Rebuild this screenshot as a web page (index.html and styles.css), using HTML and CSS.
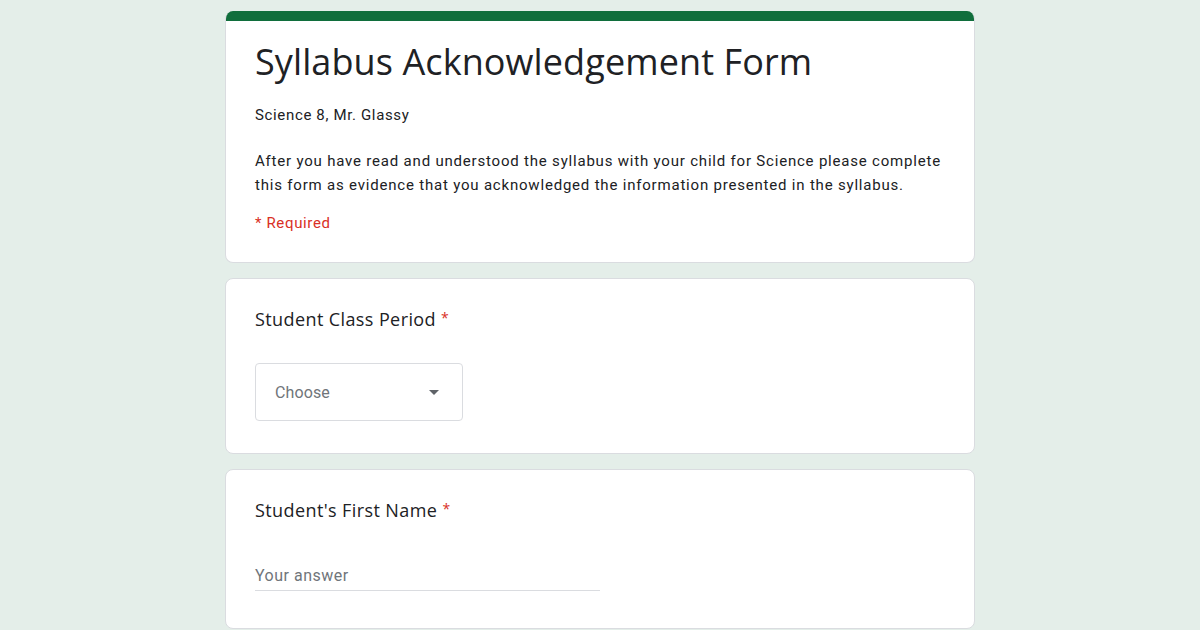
FILE: index.html
```html
<!DOCTYPE html>
<html>
<head>
<meta charset="utf-8">
<link rel="stylesheet" href="styles.css">
</head>
<body>
<div class="form">
  <div class="card header-card">
    <div class="accent"></div>
    <div class="header-body">
      <h1 class="title">Syllabus Acknowledgement Form</h1>
      <p class="subtitle">Science 8, Mr. Glassy</p>
      <p class="desc">After you have read and understood the syllabus with your child for Science please complete this form as evidence that you acknowledged the information presented in the syllabus.</p>
      <p class="required">* Required</p>
    </div>
  </div>
  <div class="card question">
    <div class="q-title">Student Class Period <span class="star">*</span></div>
    <div class="select">
      <span class="select-text">Choose</span>
      <svg class="caret" width="10" height="5" viewBox="0 0 10 5"><path d="M0 0 L10 0 L5 5 Z" fill="#5f6368"/></svg>
    </div>
  </div>
  <div class="card question">
    <div class="q-title">Student's First Name <span class="star">*</span></div>
    <div class="answer">Your answer</div>
  </div>
</div>
</body>
</html>
```

FILE: styles.css
```css
html, body {
  margin: 0;
  padding: 0;
}
body {
  background: #e4eee9;
  font-family: Roboto, "Liberation Sans", sans-serif;
  color: #202124;
  width: 1200px;
  height: 630px;
  overflow: hidden;
}
.form {
  width: 750px;
  margin: 11px auto 0;
  display: flex;
  flex-direction: column;
  gap: 15px;
}
.card {
  background: #fff;
  border: 1px solid #dadce0;
  border-radius: 8px;
  box-sizing: border-box;
}
.header-card {
  overflow: hidden;
  border-top: none;
  height: 252px;
}
.accent {
  height: 10px;
  background: #106e3c;
}
.header-body {
  padding: 17px 29px 0;
}
.title {
  margin: 0;
  font-family: "Open Sans", sans-serif;
  font-weight: 400;
  font-size: 36px;
  line-height: 48px;
  color: #202124;
  letter-spacing: 0.1px;
}
.subtitle {
  margin: 18px 0 0;
  font-size: 15px;
  line-height: 22px;
  letter-spacing: 0.65px;
}
.desc {
  margin: 23px 0 0;
  font-size: 15px;
  line-height: 24px;
  letter-spacing: 0.8px;
}
.required {
  margin: 15px 0 0;
  font-size: 15px;
  line-height: 22px;
  letter-spacing: 0.65px;
  color: #d93025;
}
.question {
  padding: 26px 29px 0;
}
.question:nth-child(2) {
  height: 176px;
}
.question:nth-child(3) {
  height: 160px;
}
.q-title {
  font-family: "Open Sans", sans-serif;
  font-size: 18px;
  line-height: 28px;
  height: 28px;
  letter-spacing: 0.4px;
  color: #202124;
}
.star {
  color: #d93025;
  font-size: 14px;
  line-height: 0;
  vertical-align: 3px;
}
.select {
  margin-top: 30px;
  width: 208px;
  height: 58px;
  box-sizing: border-box;
  border: 1px solid #dadce0;
  border-radius: 4px;
  display: flex;
  align-items: center;
  justify-content: space-between;
  padding: 0 23px 0 19px;
}
.select-text {
  font-size: 16px;
  color: #70757a;
  letter-spacing: 0.1px;
}
.answer {
  margin-top: 40px;
  width: 345px;
  font-size: 16px;
  color: #70757a;
  line-height: 24px;
  letter-spacing: 0.5px;
  padding-bottom: 2px;
  border-bottom: 1px solid #dadce0;
}
```
